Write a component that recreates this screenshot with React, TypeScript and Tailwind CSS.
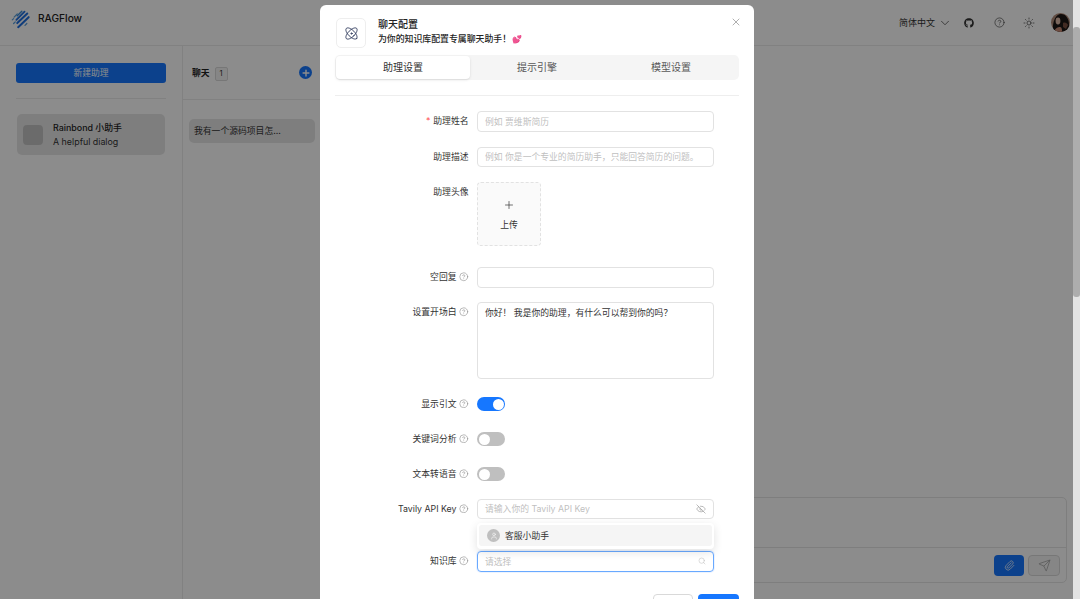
import type { ReactNode } from "react";
import { Atom, ChevronDown, CircleHelp, EyeOff, Paperclip, Plus, Search, Send, Sun, User, X } from "lucide-react";
import { FaGithub } from "react-icons/fa";

function Logo() {
  return (
    <svg width="20" height="20" viewBox="0 0 22 22" fill="none" strokeLinecap="round">
      <path d="M8 7.5 13 2.5" stroke="#3f8fd8" strokeWidth="1.6" />
      <path d="M4.5 9 8 5.5" stroke="#5b9fdc" strokeWidth="1.3" />
      <path d="M7 12 16 3" stroke="#1f6fe0" strokeWidth="2" />
      <path d="M8 15.5 19 5" stroke="#1f6fe0" strokeWidth="2.2" />
      <path d="M9 20 20.5 9" stroke="#1f6fe0" strokeWidth="2.2" />
      <path d="M2.5 12 4 10.5" stroke="#5b9fdc" strokeWidth="1.3" />
      <path d="M4 16 5.8 14.2" stroke="#5b9fdc" strokeWidth="1.4" />
      <path d="M16.5 18 18.5 16" stroke="#5b9fdc" strokeWidth="1.4" />
    </svg>
  );
}

function Avatar() {
  return (
    <svg width="19" height="19" viewBox="0 0 19 19" className="rounded-full">
      <rect width="19" height="19" fill="#b08a78" />
      <path d="M2 19C1 8 5 1 10 1s8 5 8 10l1 8z" fill="#1d1614" />
      <ellipse cx="7" cy="8" rx="2.4" ry="3.4" fill="#e0bcaa" />
      <path d="M3 19c1-4 4-5 6-5s2 3 2 5z" fill="#c98a76" />
      <path d="M12 10c2-1 4 0 5 2l-2 4-3-2z" fill="#7a4f40" />
    </svg>
  );
}

function Help() {
  return <CircleHelp className="ml-[2.5px] h-[9.5px] w-[9.5px] text-[#8c8c8c]" strokeWidth={1.5} />;
}

function Row({ label, required, help, children, className }: { label: string; required?: boolean; help?: boolean; children: ReactNode; className?: string }) {
  return (
    <div className={`flex items-start ${className ?? ""}`}>
      <div className="flex h-[20px] w-[133.5px] shrink-0 items-center justify-end text-[8.8px] text-[#333333]">
        {required && <span className="mr-[3px] text-[#ff4d4f]">*</span>}
        <span>{label}</span>
        {help && <Help />}
      </div>
      <div className="ml-[8.5px] w-[237px]">{children}</div>
    </div>
  );
}

function TextInput({ placeholder, icon, focused }: { placeholder?: string; icon?: ReactNode; focused?: boolean }) {
  return (
    <div className={`flex h-[20.5px] items-center justify-between rounded-[4px] border bg-white px-[7px] text-[8.8px] text-[#bfbfbf] ${focused ? "border-[#69a9ff] shadow-[0_0_0_1px_rgba(22,119,255,0.08)]" : "border-[#e2e2e2]"}`}>
      <span>{placeholder}</span>
      {icon}
    </div>
  );
}

function Toggle({ on }: { on?: boolean }) {
  return (
    <div className={`mt-[3.5px] flex h-[14px] w-[28px] items-center rounded-full p-[1.5px] ${on ? "justify-end bg-[#1677ff]" : "justify-start bg-[#bfbfbf]"}`}>
      <div className="h-[11px] w-[11px] rounded-full bg-white" />
    </div>
  );
}

export default function App() {
  return (
    <div className="flex h-[599px] w-full overflow-hidden bg-[#e3e3e3] font-['Inter','Noto_Sans_CJK_SC',sans-serif]">
      <div className="relative h-full w-[1073px] shrink-0 overflow-hidden bg-white">
        <header className="flex h-[46px] items-center justify-between border-b border-[#ececec] pl-[10px] pr-[3px]">
          <div className="-mt-[7px] flex items-center gap-[8px]">
            <Logo />
            <span className="text-[10.2px] font-medium text-[#222222]">RAGFlow</span>
          </div>
          <div className="flex items-center text-[#333333]">
            <span className="text-[9px]">简体中文</span>
            <ChevronDown className="ml-[3px] h-[14px] w-[14px]" strokeWidth={1.2} />
            <FaGithub className="ml-[12px] h-[10px] w-[10px]" />
            <CircleHelp className="ml-[20px] h-[11px] w-[11px]" strokeWidth={1.3} />
            <Sun className="ml-[18px] h-[12px] w-[12px]" strokeWidth={1.3} />
            <div className="ml-[16px]">
              <Avatar />
            </div>
          </div>
        </header>

        <div className="flex h-[553px]">
          <aside className="w-[183px] shrink-0 border-r border-[#ececec] px-[16px] pt-[17px]">
            <div className="flex h-[20px] items-center justify-center rounded-[3px] bg-[#1677ff] text-[8.8px] text-white">新建助理</div>
            <div className="mt-[15px] border-t border-[#ececec]" />
            <div className="mx-[1px] mt-[15px] flex h-[41px] items-center rounded-[5px] bg-[#e6e6e6] px-[6px]">
              <div className="h-[20px] w-[20px] rounded-[4px] bg-[#c4c4c4]" />
              <div className="ml-[10px] leading-[14px]">
                <div className="text-[8.9px] font-medium text-[#222222]">Rainbond 小助手</div>
                <div className="text-[8.9px] text-[#333333]">A helpful dialog</div>
              </div>
            </div>
          </aside>

          <section className="w-[150px] shrink-0 border-r border-[#ececec]">
            <div className="flex h-[54px] items-center justify-between border-b border-[#ececec] pl-[9px] pr-[20px]">
              <div className="flex items-center">
                <span className="text-[8.8px] font-bold text-[#222222]">聊天</span>
                <span className="ml-[5px] mt-[2px] flex h-[14px] w-[13px] items-center justify-center rounded-[2px] border border-[#d9d9d9] bg-[#f5f5f5] text-[7.5px] text-[#333333]">1</span>
              </div>
              <div className="flex h-[13px] w-[13px] items-center justify-center rounded-full bg-[#1677ff]">
                <Plus className="h-[10px] w-[10px] text-white" strokeWidth={3.4} />
              </div>
            </div>
            <div className="ml-[6px] mt-[19px] flex h-[24px] w-[126px] items-center rounded-[5px] bg-[#e6e6e6] px-[5px] text-[8.8px] text-[#333333]">我有一个源码项目怎...</div>
          </section>

          <main className="relative flex-1 bg-white">
            <div className="ml-[20px] mr-[6px] mt-[451px] h-[86px] rounded-[5px] border border-[#e5e5e5]">
              <div className="h-[50px] border-b border-[#e5e5e5]" />
              <div className="flex justify-end gap-[4px] pr-[6px] pt-[7px]">
                <div className="flex h-[21px] w-[30px] items-center justify-center rounded-[4px] bg-[#1677ff]">
                  <Paperclip className="h-[11px] w-[11px] text-white" strokeWidth={1.6} />
                </div>
                <div className="flex h-[21px] w-[32px] items-center justify-center rounded-[4px] border border-[#d9d9d9] bg-[#f5f5f5]">
                  <Send className="h-[13px] w-[13px] text-[#9a9a9a]" strokeWidth={1.3} />
                </div>
              </div>
            </div>
          </main>
        </div>

        <div className="absolute inset-0 bg-black/45" />

        <div className="absolute left-[320px] top-[5px] h-[620px] w-[434px] rounded-[6px] bg-white px-[15px] pt-[13px]">
          <X className="absolute right-[12px] top-[11px] h-[12px] w-[12px] text-[#8c8c8c]" strokeWidth={1.4} />
          <div className="flex items-center pl-[1px]">
            <div className="flex h-[30px] w-[30px] items-center justify-center rounded-[5px] border border-[#eeeeee]">
              <Atom className="h-[15px] w-[15px] text-[#2f3a5c]" strokeWidth={1.5} />
            </div>
            <div className="ml-[12px] -mt-[3px]">
              <div className="text-[10px] font-medium leading-[15px] text-[#222222]">聊天配置</div>
              <div className="flex items-center text-[8.9px] font-medium leading-[14px] text-[#222222]">
                为你的知识库配置专属聊天助手！
                <span className="ml-[1px] text-[8px] text-[#f0479a]">💕</span>
              </div>
            </div>
          </div>

          <div className="mt-[7px] flex h-[25px] w-[404px] rounded-[5px] bg-[#f5f5f5] p-[1px] text-[10px] text-[#595959]">
            <div className="flex w-[134px] items-center justify-center rounded-[4px] bg-white text-[#333333] shadow-sm">助理设置</div>
            <div className="flex w-[134px] items-center justify-center">提示引擎</div>
            <div className="flex w-[134px] items-center justify-center">模型设置</div>
          </div>

          <div className="mt-[15px] w-[404px] border-t border-[#eeeeee]" />

          <div className="mt-[15px] flex flex-col gap-[15px]">
            <Row label="助理姓名" required>
              <TextInput placeholder="例如 贾维斯简历" />
            </Row>
            <Row label="助理描述">
              <TextInput placeholder="例如 你是一个专业的简历助手，只能回答简历的问题。" />
            </Row>
            <Row label="助理头像" className="h-[70px]">
              <div className="flex h-[64px] w-[64px] flex-col items-center justify-center rounded-[4px] border border-dashed border-[#e2e2e2] bg-[#fafafa] pt-[3px] text-[#333333]">
                <Plus className="h-[12px] w-[12px]" strokeWidth={1.4} />
                <span className="mt-[7px] text-[8.8px]">上传</span>
              </div>
            </Row>
            <Row label="空回复" help>
              <TextInput />
            </Row>
            <Row label="设置开场白" help className="-mt-[0.5px]">
              <div className="h-[76.5px] rounded-[4px] border border-[#e2e2e2] px-[7px] py-[3px] text-[8.8px] leading-[14px] text-[#333333]">你好！ 我是你的助理，有什么可以帮到你的吗？</div>
            </Row>
            <Row label="显示引文" help>
              <Toggle on />
            </Row>
            <Row label="关键词分析" help>
              <Toggle />
            </Row>
            <Row label="文本转语音" help>
              <Toggle />
            </Row>
            <Row label="Tavily API Key" help>
              <TextInput placeholder="请输入你的 Tavily API Key" icon={<EyeOff className="h-[10px] w-[10px] text-[#8c8c8c]" strokeWidth={1.4} />} />
            </Row>
            <Row label="知识库" help className="relative mt-[17px]">
              <div className="absolute bottom-[22.5px] left-[142px] h-[26px] w-[237px] rounded-[4px] bg-white p-[2px] shadow-[0_3px_10px_rgba(0,0,0,0.12)]">
                <div className="flex h-[21px] items-center rounded-[3px] bg-[#f5f5f5] px-[8px] text-[8.8px] text-[#333333]">
                  <div className="mr-[5px] flex h-[13px] w-[13px] items-center justify-center rounded-full bg-[#bfbfbf]">
                    <User className="h-[8px] w-[8px] text-white" strokeWidth={1.6} />
                  </div>
                  客服小助手
                </div>
              </div>
              <TextInput placeholder="请选择" focused icon={<Search className="h-[8px] w-[8px] text-[#bfbfbf]" strokeWidth={1.6} />} />
            </Row>
          </div>

          <div className="mt-[22px] flex justify-end gap-[5px]">
            <div className="h-[24px] w-[40px] rounded-[4px] border border-[#d9d9d9] bg-white" />
            <div className="h-[24px] w-[41px] rounded-[4px] bg-[#1677ff]" />
          </div>
        </div>
      </div>

      <div className="h-full w-[7px] pt-[27px]">
        <div className="h-[270px] w-full rounded-[3px] bg-[#adadad]" />
      </div>
    </div>
  );
}
